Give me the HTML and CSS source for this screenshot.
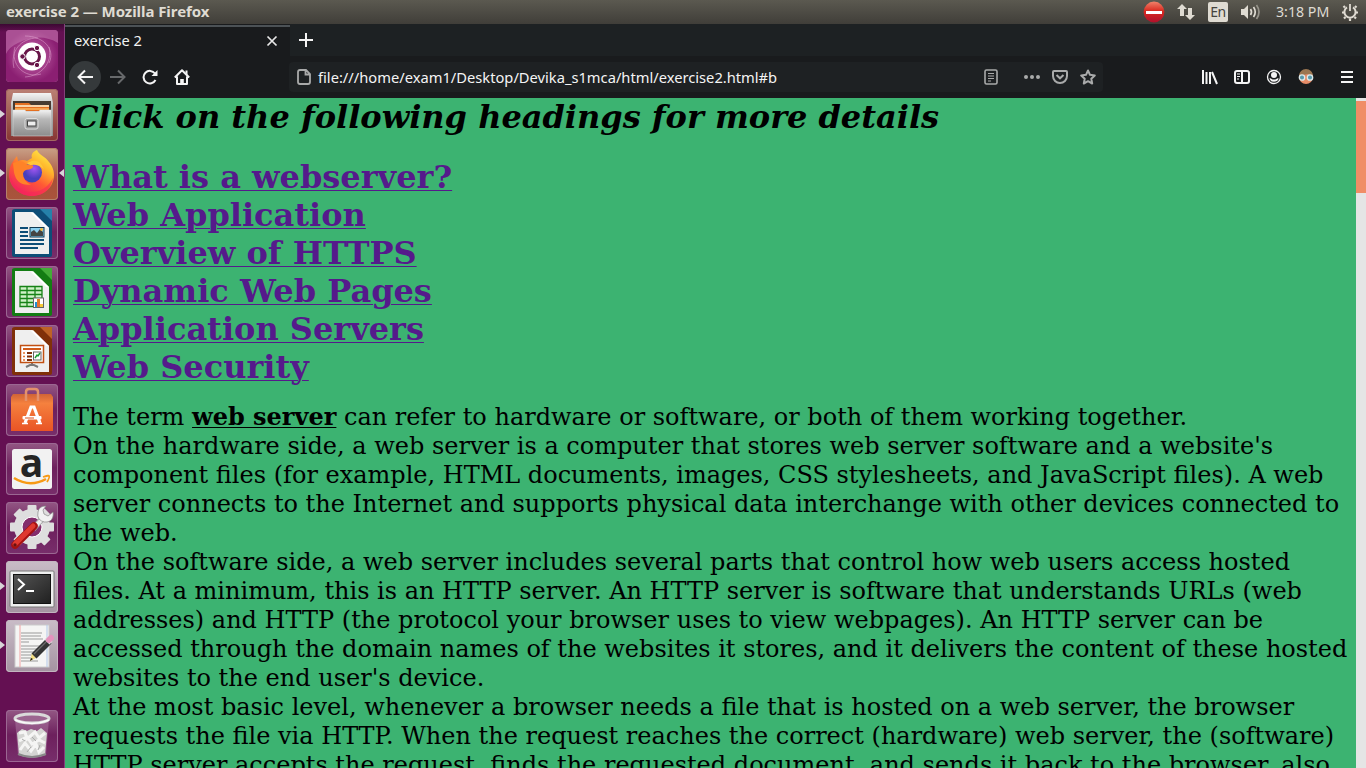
FILE: index.html
```html
<!DOCTYPE html>
<html lang="en">
<head>
<meta charset="utf-8">
<title>exercise 2 — Mozilla Firefox</title>
<link rel="stylesheet" href="styles.css">
</head>
<body>
<header class="panel">
  <span class="panel-title">exercise 2 — Mozilla Firefox</span>
  <div class="indicators">
    <svg class="ind-stop" width="22" height="22" viewBox="0 0 22 22"><defs><linearGradient id="stop" x2="0" y2="1"><stop offset="0" stop-color="#f0826a"/><stop offset=".45" stop-color="#d92a20"/><stop offset="1" stop-color="#b0102c"/></linearGradient></defs><circle cx="11" cy="11" r="10.4" fill="url(#stop)"/><rect x="3" y="10" width="16" height="3" fill="#fff"/></svg>
    <svg class="ind-net" width="18" height="18" viewBox="0 0 18 18" fill="#dfdbd2"><path d="M5 1l5 5H7v7H3V6H0zM11 5h4v7h3l-5 5-5-5h3z"/></svg>
    <span class="lang">En</span>
    <svg class="ind-vol" width="20" height="18" viewBox="0 0 20 18" fill="none" stroke="#dfdbd2" stroke-width="1.7"><path d="M0 6h3l4-4v14l-4-4H0z" fill="#dfdbd2" stroke="none"/><path d="M9.5 6q2 3 0 6M12.500 4q3.500 5 0 10"/><path d="M15.500 2q5 7 0 14" stroke="#96938a"/></svg>
    <span class="clock">3:18 PM</span>
    <svg class="ind-gear" width="16" height="18" viewBox="0 0 16 18" fill="none" stroke="#dfdbd2"><path d="M5 4.300a5.600 5.600 0 1 0 6 0" stroke-width="2"/><path d="M8 1v7" stroke-width="1.800"/><path d="M3 4.500L1.500 3M13 4.500L14.500 3M2 9.500H0M14 9.500h2M3.500 14L2 15.500M12.500 14l1.500 1.500M8 15.500V18" stroke-width="2.200"/></svg>
  </div>
</header>
<div class="desktop">
<nav class="launcher">
  <div class="tile t-dash"><svg viewBox="0 0 52 52"><defs><radialGradient id="dash"><stop offset="0" stop-color="#c96daf"/><stop offset="1" stop-color="#8b1f72"/></radialGradient></defs><rect width="52" height="52" fill="url(#dash)"/><path d="M0 0h52v13Q34 2 12 13 3 17 0 24z" fill="#e6abd4" opacity=".35"/><g fill="none" stroke="#e5acd5" opacity=".5"><path d="M8 38C4 22 14 8 32 8M19 6c18 0 31 13 24 27M43 17c4 16-8 29-24 30M35 44C18 49 4 34 9 17"/></g><circle cx="26" cy="26.500" r="14" fill="#fff"/><circle cx="26" cy="26.500" r="7.500" fill="none" stroke="#681649" stroke-width="3"/><g fill="#681649" stroke="#fff" stroke-width="1"><circle cx="16.500" cy="26.500" r="2.700"/><circle cx="31" cy="18" r="2.700"/><circle cx="31" cy="35" r="2.700"/></g></svg></div>
  <div class="tile t-files run"><svg viewBox="0 0 52 52"><defs><linearGradient id="cab" x2="0" y2="1"><stop offset="0" stop-color="#f4f4f4"/><stop offset=".35" stop-color="#b8b8b8"/><stop offset="1" stop-color="#8d8d8d"/></linearGradient></defs><path d="M7 4h38l2 10v33H5V14z" fill="url(#cab)"/><path d="M7 12h38v10H7z" fill="#473a31"/><path d="M9 14h14l2 2h18v6H9z" fill="#e46f21"/><path d="M9 17h34" stroke="#fff4d8" stroke-width="1.500"/><path d="M9 20h34" stroke="#f6a24b" stroke-width="2"/><path d="M7 21h12l1 1.500h13l1-1.500h11v26H7z" fill="url(#cab)" stroke="#ddd" stroke-width=".5"/><rect x="19" y="29.500" width="13" height="10.500" rx="2" fill="#9a9a9a" stroke="#ddd"/><rect x="21.500" y="32" width="8.500" height="5" fill="#eee" stroke="#444"/></svg></div>
  <div class="tile t-firefox run focus"><svg viewBox="0 0 52 52"><defs><linearGradient id="fox" x1=".85" y1="0" x2=".2" y2="1"><stop offset="0" stop-color="#fff04e"/><stop offset=".3" stop-color="#ffb52b"/><stop offset=".58" stop-color="#ff5a34"/><stop offset="1" stop-color="#ee1769"/></linearGradient><radialGradient id="globe" cx=".6" cy=".3"><stop offset="0" stop-color="#a356f2"/><stop offset="1" stop-color="#453fbc"/></radialGradient></defs><path d="M8 12l3-4 1 5q5-2 9 0l5-3c-1-3 0-6 5-8 2 5 8 6 12 12 4 5 5 9 5 13 0 12-10 21-22 21S3 39 3 27q0-9 5-15z" fill="url(#fox)"/><circle cx="26" cy="24.500" r="10" fill="url(#globe)"/><path d="M7 15q8-4 13 1l7 1.500q1 2.500-4 4-5 0-6 4 0 8 8 11-14 2-17-12z" fill="#ff8228"/><path d="M26 13q8-2 12 8-7-5-12-4-4 0-5-2z" fill="#ffc53a"/><path d="M4 26q3 16 19 18 16 1 24-14-3 17-21 18Q5 47 4 26z" fill="#f5275a" opacity=".55"/></svg></div>
  <div class="tile t-office"><svg viewBox="0 0 52 52"><path d="M9 2h26l11 11v35q0 2-2 2H8q-2 0-2-2V4q0-2 3-2z" fill="#0d4d77"/><path d="M9 5h17L43 21v26H9z" fill="#efefef"/><path d="M27 5l16 16h-3L25 6z" fill="#fff"/><path d="M34 2h12v12z" fill="#2681aa"/><path d="M14 21h8M14 25h8M14 29h8M14 33h24M14 37h24M14 41h18" stroke="#0d4d77" stroke-width="1.900"/><rect x="24" y="20.500" width="14" height="9.500" fill="#8bd0ef" stroke="#123b53"/><path d="M25 29v-4l3-2 3 3 3-4 3 3v4z" fill="#444"/><circle cx="35.500" cy="22.500" r="1.400" fill="#f5bb36"/></svg></div>
  <div class="tile t-office"><svg viewBox="0 0 52 52"><path d="M9 2h26l11 11v35q0 2-2 2H8q-2 0-2-2V4q0-2 3-2z" fill="#137c13"/><path d="M9 5h17L43 21v26H9z" fill="#efefef"/><path d="M27 5l16 16h-3L25 6z" fill="#fff"/><path d="M34 2h12v12z" fill="#42ac37"/><rect x="14" y="20.500" width="22" height="20" fill="#cff1c7"/><path d="M14 20.500h22v20H14zM14 24.500h22M14 28.500h22M14 32.500h22M14 36.500h22M21 20.500v20M29 20.500v20" fill="none" stroke="#168216" stroke-width="1.300"/><rect x="27.500" y="32" width="10" height="9.500" fill="#fff" stroke="#666"/><path d="M29 41v-5h2v5z" fill="#238ed2"/><path d="M31 41v-8h3v8z" fill="#e6762b"/><path d="M34 41v-3h3v3z" fill="#f7ca38"/></svg></div>
  <div class="tile t-office"><svg viewBox="0 0 52 52"><path d="M9 2h26l11 11v35q0 2-2 2H8q-2 0-2-2V4q0-2 3-2z" fill="#803009"/><path d="M9 5h17L43 21v26H9z" fill="#efefef"/><path d="M27 5l16 16h-3L25 6z" fill="#fff"/><path d="M34 2h12v12z" fill="#bd6226"/><path d="M26 38v3M20 42l6-3 6 3" stroke="#777" stroke-width="2" fill="none"/><rect x="14.500" y="20.500" width="23" height="17" fill="#fff" stroke="#c15013" stroke-width="1.500"/><path d="M17 24h18" stroke="#d15b19" stroke-width="2"/><path d="M17 28h2M17 31.500h2M17 35h2" stroke="#e37530" stroke-width="1.500"/><path d="M21 28h5M21 31.500h5M21 35h5" stroke="#803009" stroke-width="1.800"/><rect x="27.500" y="27" width="7.500" height="8" fill="#fff" stroke="#666"/><path d="M29 33l2-3 1 1 2-3" stroke="#169b31" fill="none" stroke-width="1.400"/></svg></div>
  <div class="tile t-soft"><svg viewBox="0 0 52 52"><defs><linearGradient id="bag" x2="0" y2="1"><stop offset="0" stop-color="#cf6336"/><stop offset=".25" stop-color="#f5813e"/><stop offset="1" stop-color="#e95425"/></linearGradient></defs><path d="M7 10h38l2 3v34H5V13z" fill="url(#bag)"/><path d="M20 17V8q0-3 3-3h6q3 0 3 3v9" fill="none" stroke="#e3916c" stroke-width="2.500"/><path d="M19 39l6-16h3l6 16" fill="none" stroke="#fff" stroke-width="3.200"/><rect x="16.500" y="32" width="19" height="3.500" rx="1" fill="#fff"/><path d="M19 34h9" stroke="#d9531e"/><path d="M16 39.500h6M30 39.500h6" stroke="#fff" stroke-width="1.500"/></svg></div>
  <div class="tile t-amazon"><svg viewBox="0 0 52 52"><rect x="6" y="6" width="40" height="40" rx="2.500" fill="#f2f2f2"/><text x="25.500" y="33.500" text-anchor="middle" class="amazon-a">a</text><path d="M8 35q16 10 32 1" fill="none" stroke="#f79a16" stroke-width="2.500"/><path d="M37 34q6-2 6-1 1 1-2 6" fill="none" stroke="#f79a16" stroke-width="1.800"/></svg></div>
  <div class="tile t-settings"><svg viewBox="0 0 52 52"><g transform="translate(26 25)"><g fill="#dedede"><rect x="-4.500" y="-22" width="9" height="44" rx="1"/><rect x="-4.500" y="-22" width="9" height="44" rx="1" transform="rotate(45)"/><rect x="-4.500" y="-22" width="9" height="44" rx="1" transform="rotate(90)"/><rect x="-4.500" y="-22" width="9" height="44" rx="1" transform="rotate(135)"/><circle r="18"/></g><circle r="10" fill="#842d6c" stroke="#fff"/></g><path d="M27 27L38 15" stroke="#aaa" stroke-width="6"/><path d="M28 26L38 15" stroke="#eee" stroke-width="4"/><path d="M40 4q-7 0-8 6-1 4 1 7 5 5 11 2 4-3 3-9l-5 4-4-2-1-4z" fill="#f2f2f2" stroke="#888" stroke-width=".7"/><path d="M9 43L28 24" stroke="#a61111" stroke-width="7.500" stroke-linecap="round"/><path d="M9 42L27 24" stroke="#df3930" stroke-width="5" stroke-linecap="round"/><circle cx="9" cy="43" r="1.700" fill="#681111"/></svg></div>
  <div class="tile t-light run"><svg viewBox="0 0 52 52"><defs><linearGradient id="term" x2="1" y2="1"><stop offset="0" stop-color="#555"/><stop offset="1" stop-color="#202020"/></linearGradient></defs><rect x="4" y="10" width="44" height="36" rx="1" fill="#efefef" stroke="#777"/><rect x="7.500" y="13.500" width="37" height="29" fill="url(#term)" stroke="#111"/><path d="M12 18l6 5.500-6 5.500M20 30h8" fill="none" stroke="#fff" stroke-width="2"/></svg></div>
  <div class="tile t-light run"><svg viewBox="0 0 52 52"><rect x="9" y="5" width="34" height="42" fill="#f5f5f4" stroke="#ccc"/><path d="M14 5v42" stroke="#f3a3a3"/><path d="M41 5v42" stroke="#b3c8e9"/><path d="M15 13h21M15 16h20M15 19h22M15 22h8M15 26h19M15 29h20M15 32h18M15 35h18M15 38h13M15 41h17" stroke="#999" stroke-width="1"/><path d="M24 41l2-8 4 5z" fill="#f3df83"/><path d="M28 36L43 21" stroke="#353535" stroke-width="7"/><path d="M28 34L42 20" stroke="#6b6b6b" stroke-width="1.200"/><path d="M41 22l3-3" stroke="#ddd" stroke-width="7"/><path d="M43 20l2-2" stroke="#e493bd" stroke-width="6" stroke-linecap="round"/><path d="M24 41l1-3 2 1z" fill="#111"/></svg></div>
  <div class="tile t-trash"><svg viewBox="0 0 52 52"><path d="M9 9l3 36q14 6 28 0l3-36z" fill="#c79abd" opacity=".35"/><path d="M11 23l5-4 5 2 4-2 6 2 4-3 6 5-2 22q-13 5-26 0z" fill="#d4d4d2"/><path d="M13 23l6-1 2 7 8-7 4 6 6-5M13 31l8-4 5 7 7-4 6 3M14 40l5-7 6 8 5-7 3 8 5-5" fill="none" stroke="#f5f5f4" stroke-width="3"/><path d="M16 29l3 2M26 27l4 4M25 37l-4 5M34 35l-2 5" stroke="#aaa"/><path d="M12 44q14 6 28 0" fill="none" stroke="#888" stroke-width="2"/><ellipse cx="26" cy="8.500" rx="17" ry="4.500" fill="#9c6690" stroke="#dadada" stroke-width="3"/><path d="M9 10q17 7 34 0" stroke="#fafafa" fill="none" stroke-width="1.500"/></svg></div>
</nav>
<main class="browser">
  <div class="tabs">
    <div class="tab"><span class="tab-title">exercise 2</span><svg width="12" height="12" viewBox="0 0 12 12" stroke="#e8e8e8" stroke-width="1.700"><path d="M1.500 1.500l9 9M10.500 1.500l-9 9"/></svg></div>
    <svg class="plus" width="16" height="16" viewBox="0 0 16 16" stroke="#f4f4f4" stroke-width="2"><path d="M8 1v14M1 8h14"/></svg>
  </div>
  <div class="toolbar">
    <span class="back"><svg width="16" height="16" viewBox="0 0 16 16"><path d="M16 8H1.500M8 1.500L1.500 8 8 14.500"/></svg></span>
    <svg class="fwd" width="16" height="16" viewBox="0 0 16 16"><path d="M0 8h14.500M8 1.500L14.500 8 8 14.500"/></svg>
    <svg class="reload" width="16" height="16" viewBox="0 0 16 16"><path d="M13 4.500A6.300 6.300 0 1 0 13.500 11"/><path d="M15.500 1v6h-6z" fill="#f4f4f4" stroke="none"/></svg>
    <svg class="home" width="16" height="16" viewBox="0 0 16 16"><path d="M.8 8.500L8 1.300l7.200 7.200M3 7.500V15h10V7.500M8 15v-4" stroke-linejoin="round"/><path d="M6.200 10h3.600v5H6.200zM11.500 1.500h2V6l-2-2z" fill="#f4f4f4" stroke="none"/></svg>
    <div class="urlbar">
      <svg class="doc" width="14" height="16" viewBox="0 0 14 16"><path d="M3 1h6l4 4v8q0 2-2 2H3q-2 0-2-2V3q0-2 2-2zM8.500 1v4.500H13"/></svg>
      <span class="url">file:///home/exam1/Desktop/Devika_s1mca/html/exercise2.html#b</span>
      <svg class="reader" width="14" height="16" viewBox="0 0 14 16"><rect x="1" y="1" width="12" height="14" rx="1.500"/><path d="M4 4.500h6M4 7h6M4 9.500h6M4 12h3" stroke-width="1.200"/></svg>
      <svg class="dots" width="16" height="16" viewBox="0 0 16 16" ><g fill="#a9aaaa" stroke="none"><circle cx="2" cy="8" r="2"/><circle cx="8" cy="8" r="2"/><circle cx="14" cy="8" r="2"/></g></svg>
      <svg class="pocket" width="16" height="16" viewBox="0 0 16 16"><path d="M2 2h12q1 0 1 1v4a7 7 0 0 1-14 0V3q0-1 1-1zM4.500 6L8 9.300 11.500 6"/></svg>
      <svg class="star" width="16" height="16" viewBox="0 0 16 16"><path d="M8 1.500l2 4.300 4.800.6-3.500 3.300.9 4.800L8 12.200l-4.200 2.300.9-4.800L1.200 6.400 6 5.800z" stroke-linejoin="round"/></svg>
    </div>
    <svg class="lib" width="16" height="16" viewBox="0 0 16 16"><path d="M1 1v14M4.500 3v12M8 3v12M10 3l5 12"/></svg>
    <svg class="side" width="16" height="16" viewBox="0 0 16 16"><rect x="1" y="2" width="14" height="12" rx="2"/><path d="M8 2v12"/><path d="M3 5h3M3 7.500h3M3 10h2" stroke-width="1.200"/></svg>
    <svg class="acct" width="16" height="16" viewBox="0 0 16 16"><circle cx="8" cy="8" r="6.500" stroke-width="1.300"/><g fill="#f4f4f4" stroke="none"><circle cx="8" cy="6" r="3"/><path d="M3.300 9.500q1.500-.5 2 .2 2.700 1.700 5.400 0 .5-.7 2-.2Q11.500 12.800 8 12.800T3.300 9.500z"/></g></svg>
    <svg class="face" width="16" height="16" viewBox="0 0 16 16"><circle cx="8" cy="8" r="7" fill="#e58c68" stroke="none"/><path d="M1 7a7 7 0 0 1 14 0L10 5 5 6z" fill="#9b7651" stroke="none"/><g fill="#5b9aab" stroke="#dceaec" stroke-width="1.300"><circle cx="4" cy="8.500" r="2.700"/><circle cx="12" cy="8.500" r="2.700"/></g></svg>
    <svg class="menu" width="12" height="12" viewBox="0 0 12 12"><path d="M0 1h12M0 6h12M0 11h12"/></svg>
  </div>
  <div class="view">
    <article class="page">
      <h1><i>Click on the following headings for more details</i></h1>
      <h1 class="links"><a href="#a">What is a webserver?</a><br><a href="#b">Web Application</a><br><a href="#c">Overview of HTTPS</a><br><a href="#d">Dynamic Web Pages</a><br><a href="#e">Application Servers</a><br><a href="#f">Web Security</a></h1>
      <p>The term <b><u>web server</u></b> can refer to hardware or software, or both of them working together.<br>
On the hardware side, a web server is a computer that stores web server software and a website's<br>
component files (for example, HTML documents, images, CSS stylesheets, and JavaScript files). A web<br>
server connects to the Internet and supports physical data interchange with other devices connected to<br>
the web.<br>
On the software side, a web server includes several parts that control how web users access hosted<br>
files. At a minimum, this is an HTTP server. An HTTP server is software that understands URLs (web<br>
addresses) and HTTP (the protocol your browser uses to view webpages). An HTTP server can be<br>
accessed through the domain names of the websites it stores, and it delivers the content of these hosted<br>
websites to the end user's device.<br>
At the most basic level, whenever a browser needs a file that is hosted on a web server, the browser<br>
requests the file via HTTP. When the request reaches the correct (hardware) web server, the (software)<br>
HTTP server accepts the request, finds the requested document, and sends it back to the browser, also</p>
    </article>
    <div class="scrollbar"><div class="thumb"></div></div>
  </div>
</main>
</div>
</body>
</html>
```
FILE: styles.css
```css
* { box-sizing: border-box; }
body { margin: 0; width: 1366px; height: 768px; overflow: hidden; display: flex; flex-direction: column; font-family: "Noto Sans", "Open Sans", sans-serif; }
svg { display: block; flex: none; }
.panel { height: 24px; flex: none; background: linear-gradient(#5b5950, #403e39); display: flex; align-items: center; justify-content: space-between; padding: 0 8px 0 6px; color: #dfdbd2; }
.panel-title { font-weight: 700; font-size: 15px; line-height: 22px; padding-bottom: 2px; white-space: pre; letter-spacing: -0.06px; }
.indicators { display: flex; align-items: center; }
.ind-stop { margin-right: 12px; }
.ind-net { margin-right: 13px; }
.lang { width: 20px; height: 20px; border-radius: 2px; background: #dfdbd2; color: #45433e; font-size: 14px; line-height: 20px; text-align: center; letter-spacing: -0.5px; margin-right: 13px; }
.ind-vol { margin-right: 15px; }
.clock { width: 53px; font-size: 14.2px; line-height: 20px; padding-bottom: 1px; white-space: nowrap; margin-right: 13px; }
.desktop { flex: 1; display: flex; min-height: 0; }
.launcher { width: 65px; flex: none; background: linear-gradient(#3c0833, #641052 8px); border-right: 1px solid #84407a; padding: 6px 0 6px 6px; display: flex; flex-direction: column; gap: 7px; }
.tile { position: relative; width: 52px; height: 52px; flex: none; border-radius: 4px; background: linear-gradient(#935784, #6d205d 48%, #782e6b); box-shadow: inset 0 0 0 1px #9b6792; }
.tile svg { width: 52px; height: 52px; border-radius: 4px; }
.t-dash { background: #94337f; }
.t-files { background: linear-gradient(#bb8175, #863532); box-shadow: inset 0 0 0 1px #a46862; }
.t-firefox { background: linear-gradient(#c9a087, #a75039 60%, #a9543c); box-shadow: inset 0 0 0 1px #b4806b; }
.t-light { background: linear-gradient(#c9bcc7, #a493a1); box-shadow: inset 0 0 0 1px #c3b5c0; }
.t-trash { margin-top: auto; }
.run::before { content: ""; position: absolute; left: -6px; top: 21px; border: 4.5px solid transparent; border-left: 5px solid #d8d4d8; border-right: 0; }
.focus::after { content: ""; position: absolute; right: -6px; top: 21px; border: 4.5px solid transparent; border-right: 5px solid #d8d4d8; border-left: 0; }
.amazon-a { font: 700 39px/1 "Open Sans", sans-serif; fill: #252525; }
.browser { flex: 1; min-width: 0; display: flex; flex-direction: column; background: #191b1d; }
.tabs { height: 32px; flex: none; display: flex; align-items: center; background: #1d2123; }
.tab { width: 225px; height: 32px; background: #191b1d; box-shadow: inset 0 1px #191b1d, inset 0 3px #4c5256; display: flex; align-items: center; justify-content: space-between; padding: 2px 12px 0 9px; color: #f2f2f2; font-size: 14.67px; }
.tab-title { line-height: 20px; padding-bottom: 2px; letter-spacing: 0.02px; }
.plus { margin-left: 8px; }
.toolbar { height: 42px; flex: none; display: flex; align-items: center; padding-left: 4px; }
.toolbar svg { fill: none; stroke: #f4f4f4; stroke-width: 2; }
.back { width: 32px; height: 32px; border-radius: 50%; background: #35393b; display: flex; align-items: center; justify-content: center; margin-right: 9px; }
.toolbar .fwd { margin-right: 16px; stroke: #67696b; }
.reload { margin-right: 16px; }
.home { margin-right: 99px; }
.urlbar { width: 814px; height: 30px; border-radius: 4px; background: #1e2123; display: flex; align-items: center; padding: 0 7px 0 8px; margin-right: 99px; }
.toolbar .urlbar svg { stroke: #a9aaaa; }
.toolbar .urlbar .doc { stroke-width: 1.8; }
.toolbar .urlbar .reader { stroke-width: 1.6; }
.url { flex: 1; margin-left: 7px; color: #f4f4f4; font-size: 14.7px; line-height: 20px; white-space: nowrap; }
.reader { margin-right: 26px; }
.dots, .pocket { margin-right: 12px; }
.lib, .side, .acct { margin-right: 16px; }
.face { margin-right: 27px; }
.view { flex: 1; min-height: 0; display: flex; }
.page { flex: 1; min-width: 0; overflow: hidden; background: #3cb371; padding-left: 8px; color: #000; font-family: "DejaVu Serif", serif; white-space: nowrap; }
.page h1 { font-size: 32px; line-height: 38px; margin: 0 0 22px; }
.page .links { margin-bottom: 16px; }
.page a { color: #551a8b; text-decoration-thickness: 1px; text-underline-offset: 2px; }
.page p { margin: 0; font-size: 24px; line-height: 29px; }
.page u { text-decoration-thickness: 1px; text-underline-offset: 2px; }
.scrollbar { width: 10px; flex: none; background: #e5e5e5; padding-top: 3px; }
.thumb { height: 92px; background: #f08d66; }
```
